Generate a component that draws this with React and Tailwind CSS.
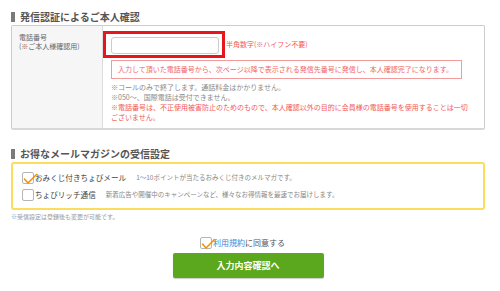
import React from 'react';

function Check() {
  return (
    <svg
      className="absolute left-0 top-0"
      width="15"
      height="12"
      viewBox="0 0 15 12"
      fill="none"
    >
      <path d="M1.5 6 L5 10 L13.5 1.5" stroke="#f39200" strokeWidth="1.5" strokeLinecap="round" strokeLinejoin="round" />
    </svg>
  );
}

function Box({ checked }) {
  return (
    <span className="relative block w-[12px] h-[12px] shrink-0 border border-[#b5b5b5] rounded-[2px] bg-white">
      {checked && <Check />}
    </span>
  );
}

function SectionTitle({ children }) {
  return (
    <div className="flex items-center gap-[5px] h-[10px]">
      <span className="block w-[4px] h-[10px] bg-[#7a7a7a]" />
      <span className="text-[10px] leading-[10px] font-bold text-[#555]">{children}</span>
    </div>
  );
}

export default function App() {
  return (
    <div className="w-[500px] h-[291px] bg-white overflow-hidden pl-[11px] pr-[15px] pt-[12px] font-['Noto_Sans_CJK_JP','Noto_Sans',sans-serif]">
      {/* 発信認証 */}
      <SectionTitle>発信認証によるご本人確認</SectionTitle>

      <div className="mt-[3px] h-[105px] flex border border-[#ccc] border-b-2 border-b-[#d8d8d8] rounded-[2px]">
        <div className="w-[91px] bg-[#f6f6f6] border-r border-[#ddd] pt-[7px] pl-[7px] text-[7px] leading-[9px] text-[#666]">
          <div>電話番号</div>
          <div>(※ご本人様確認用)</div>
        </div>

        <div className="flex-1 flex flex-col">
          <div className="pt-[5px] flex items-center">
            <div className="w-[122px] h-[27px] border-[3px] border-[#e5161e] pl-[5px] pt-[3px]">
              <input className="block w-[108px] h-[17px] border border-[#ccc] rounded-[3px] bg-white outline-none" />
            </div>
            <span className="ml-[1px] text-[7px] text-[#f25a5a] whitespace-nowrap">半角数字(※ハイフン不要)</span>
          </div>

          <div className="ml-[8px] mt-[2px] w-[351px] h-[19px] flex items-center px-[6px] border border-[#f39a9a] text-[7px] text-[#f26565] whitespace-nowrap">
            入力して頂いた電話番号から、次ページ以降で表示される発信先番号に発信し、本人確認完了になります。
          </div>

          <div className="ml-[8px] mt-[3px] text-[7px] leading-[10px] whitespace-nowrap">
            <div className="text-[#8a8a8a]">※コールのみで終了します。通話料金はかかりません。</div>
            <div className="text-[#8a8a8a]">※050～、国際電話は受付できません。</div>
            <div className="text-[#f25a5a]">
              ※電話番号は、不正使用被害防止のためのもので、本人確認以外の目的に会員様の電話番号を使用することは一切
              <br />
              ございません。
            </div>
          </div>
        </div>
      </div>

      {/* メールマガジン */}
      <div className="mt-[19px]">
        <SectionTitle>お得なメールマガジンの受信設定</SectionTitle>
      </div>

      <div className="mt-[3px] h-[48px] border-2 border-[#fbdc5c] rounded-[3px] pl-[9px] pt-[8px] flex flex-col gap-[5px]">
        <label className="flex items-center h-[12px]">
          <Box checked />
          <span className="ml-[1px] text-[7.6px] text-[#444] whitespace-nowrap">おみくじ付きちょびメール</span>
          <span className="ml-[10px] text-[6.5px] text-[#888] whitespace-nowrap">1～10ポイントが当たるおみくじ付きのメルマガです。</span>
        </label>
        <label className="flex items-center h-[12px]">
          <Box />
          <span className="ml-[1px] text-[7.6px] text-[#444] whitespace-nowrap">ちょびリッチ通信</span>
          <span className="ml-[10px] text-[6.5px] text-[#888] whitespace-nowrap">新着広告や開催中のキャンペーンなど、様々なお得情報を最速でお届けします。</span>
        </label>
      </div>

      <div className="mt-[3px] text-[6px] leading-[8px] text-[#999]">※受信設定は登録後も変更が可能です。</div>

      {/* 同意 + ボタン */}
      <div className="mt-[16px] flex justify-center">
        <label className="mr-[11px] flex items-center h-[12px]">
          <Box checked />
          <span className="ml-[1px] text-[8px] text-[#555] whitespace-nowrap">
            <span className="text-[#3a85d8]">利用規約</span>に同意する
          </span>
        </label>
      </div>

      <div className="mt-[4px] flex justify-center">
        <button className="w-[151px] h-[25px] bg-[#5ba71d] rounded-[2px] text-white text-[9px] font-bold shadow-[0_1px_1px_rgba(0,0,0,0.2)]">
          入力内容確認へ
        </button>
      </div>
    </div>
  );
}
